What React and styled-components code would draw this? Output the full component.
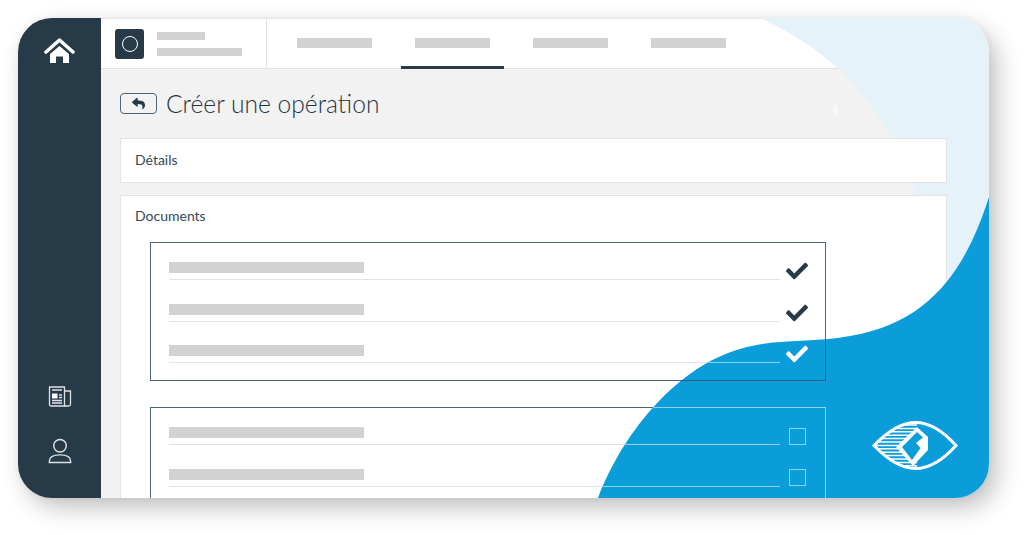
import React from 'react'
import styled, { createGlobalStyle } from 'styled-components'
import { FaCheck, FaReply } from 'react-icons/fa'

const BLOB = 'M989 197 C968 262 935 322 850 336 C815 343 775 338 740 349 C680 366 625 428 598 498 L989 498 Z'
const WASH = 'M760 18 C790 31 816 49 838 68 C860 88 878 115 892 138 C903 158 913 180 920 215 L930 260 L989 300 L989 18 Z'
const EYE = 'M874 445.5 C888 431 902 422.5 915.5 422.5 C929 422.5 943 431 956 445.5 C943 460 929 468.5 915.5 468.5 C902 468.5 888 460 874 445.5 Z'
const STRIPES = [425, 428.4, 431.8, 435.2, 438.6, 442, 445.4, 448.8, 452.2, 455.6, 459, 462.4, 465.8]
const LINES = [279.5, 321.5, 362.5, 444.5, 486.5]
const TABS = [1, 2, 3, 4]

export default function App() {
  return (
    <>
      <GlobalStyle />
      <Page>
        <Card>
          <Sidebar>
            <HomeIcon />
            <SideBottom>
              <NewsIcon />
              <UserIcon />
            </SideBottom>
          </Sidebar>

          <Main>
            <Header>
              <Brand>
                <Tile><TileRing /></Tile>
                <BrandBars>
                  <Bar $w={48} $h={8} />
                  <Bar $w={85} $h={8} />
                </BrandBars>
              </Brand>
              <Tabs>
                {TABS.map((t) => (
                  <Tab key={t} $active={t === 2}>
                    <Bar $w={75} $h={10} />
                  </Tab>
                ))}
              </Tabs>
            </Header>

            <Wash viewBox="101 18 888 480" preserveAspectRatio="none">
              <path d={WASH} fill="#e5f2fa" />
              <path d="M834 105 h3 v5 h2 l-3.500 5 l-3.500 -5 h2 Z" fill="#f9f9f9" />
            </Wash>

            <Content>
              <TitleRow>
                <BackButton><FaReply /></BackButton>
                <Title>Créer une opération</Title>
              </TitleRow>

              <Panel>
                <PanelLabel>Détails</PanelLabel>
              </Panel>

              <DocPanel>
                <DocLabel>Documents</DocLabel>
                <DocBox $gap={26}>
                  <Row><RowBody><Bar $w={195} $h={11} /></RowBody><Mark><FaCheck /></Mark></Row>
                  <Row><RowBody><Bar $w={195} $h={11} /></RowBody><Mark><FaCheck /></Mark></Row>
                  <Row><RowBody><Bar $w={195} $h={11} /></RowBody><Mark $light><FaCheck /></Mark></Row>
                </DocBox>
                <DocBox>
                  <Row><RowBody><Bar $w={195} $h={11} /></RowBody><Mark $light><Square /></Mark></Row>
                  <Row><RowBody><Bar $w={195} $h={11} /></RowBody><Mark $light><Square /></Mark></Row>
                </DocBox>
              </DocPanel>
            </Content>
          </Main>

          <Blob viewBox="18 18 971 480">
            <defs>
              <clipPath id="blob-clip"><path d={BLOB} /></clipPath>
              <clipPath id="eye-clip"><path d={EYE} /></clipPath>
            </defs>
            <path d={BLOB} fill="#0a9dda" />
            <g clipPath="url(#blob-clip)" fill="none">
              <rect x="150.500" y="242.500" width="675" height="138" stroke="#2c5d79" />
              <rect x="150.500" y="407.500" width="675" height="200" stroke="#8ed0ef" />
              {LINES.map((y) => (
                <line key={y} x1="169" x2="780" y1={y} y2={y} stroke="#8ed0ef" />
              ))}
            </g>
            <g clipPath="url(#eye-clip)">
              {STRIPES.map((y) => (
                <line key={y} x1="874" x2="917" y1={y} y2={y} stroke="#fff" strokeWidth="1.500" />
              ))}
            </g>
            <path d={EYE} fill="none" stroke="#fff" strokeWidth="3" />
            <path d="M896 447 L917 427 L928 437 L928 450 L913 466 Z" fill="#fff" />
            <path d="M902 447 L917 432 L923 437.500 L916 443 L920.500 448 L912 460 Z" fill="#0a9dda" />
          </Blob>
        </Card>
      </Page>
    </>
  )
}

function HomeIcon() {
  return (
    <HomeSvg viewBox="44 36 32 27">
      <path d="M46 51 L59.500 39 L73 51" fill="none" stroke="#fff" strokeWidth="3.500" strokeLinecap="round" strokeLinejoin="round" />
      <path d="M50 53 L59.500 45 L69 53 V62 H63 V55.500 H56 V62 H50 Z" fill="#fff" />
    </HomeSvg>
  )
}

function NewsIcon() {
  return (
    <SideSvg viewBox="0 0 24 24">
      <g fill="none" stroke="#dfe3e6" strokeWidth="1.300">
        <path d="M1.500 2.500 H16.500 V21.500 H3 Q1.500 21.500 1.500 20 Z" />
        <path d="M16.500 6.500 H22.500 V20 Q22.500 21.500 20.500 21.500 H16.500" />
        <path d="M4 5.500 H14 M11 10.500 H14 M11 13 H14 M4 16 H14 M4 18.500 H14" />
      </g>
      <rect x="4" y="9" width="5.500" height="5" fill="#fff" />
    </SideSvg>
  )
}

function UserIcon() {
  return (
    <SideSvg viewBox="0 0 24 28">
      <g fill="none" stroke="#dfe3e6" strokeWidth="1.500">
        <circle cx="12" cy="8" r="6.500" />
        <path d="M1 25.500 V24 C1 19.500 6 17.500 12 17.500 C18 17.500 23 19.500 23 24 V25.500 Z" />
      </g>
    </SideSvg>
  )
}

const GlobalStyle = createGlobalStyle`
  html, body {
    margin: 0;
    background: #fff;
    font-family: "Lato", "Liberation Sans", sans-serif;
  }
`

const Page = styled.div`
  width: 1024px;
  height: 535px;
  padding: 18px 35px 37px 18px;
  box-sizing: border-box;
  overflow: hidden;
`

const Card = styled.div`
  position: relative;
  display: flex;
  width: 971px;
  height: 480px;
  border-radius: 34px;
  overflow: hidden;
  background: #f2f2f2;
  box-shadow: 8px 10px 24px rgba(0, 0, 0, 0.24), 0 0 10px rgba(0, 0, 0, 0.05);
`

const Sidebar = styled.aside`
  flex: 0 0 83px;
  display: flex;
  flex-direction: column;
  align-items: center;
  justify-content: space-between;
  padding: 19px 0 33px;
  box-sizing: border-box;
  background: #263a48;
`

const SideBottom = styled.div`
  display: flex;
  flex-direction: column;
  align-items: center;
  gap: 28px;
`

const HomeSvg = styled.svg`
  width: 32px;
  height: 27px;
`

const SideSvg = styled.svg`
  width: 24px;
  height: 27px;
`

const Main = styled.main`
  position: relative;
  flex: 1;
  min-width: 0;
  display: flex;
  flex-direction: column;
`

const Header = styled.header`
  flex: 0 0 51px;
  display: flex;
  box-sizing: border-box;
  background: #fff;
  border-top: 1px solid #e6e6e6;
  border-bottom: 1px solid #e2e2e2;
`

const Brand = styled.div`
  flex: 0 0 166px;
  display: flex;
  align-items: center;
  gap: 13px;
  padding-left: 14px;
  box-sizing: border-box;
  border-right: 1px solid #e2e2e2;
`

const Tile = styled.div`
  display: flex;
  align-items: center;
  justify-content: center;
  width: 29px;
  height: 30px;
  border-radius: 3px;
  background: #263a48;
`

const TileRing = styled.span`
  width: 14px;
  height: 14px;
  border: 1.500px solid #fff;
  border-radius: 50%;
`

const BrandBars = styled.div`
  display: flex;
  flex-direction: column;
  gap: 8px;
`

const Bar = styled.span`
  display: block;
  width: ${(p) => p.$w}px;
  height: ${(p) => p.$h}px;
  background: #d2d2d2;
`

const Tabs = styled.nav`
  display: flex;
  gap: 15px;
  padding-left: 16px;
`

const Tab = styled.div`
  display: flex;
  align-items: center;
  justify-content: center;
  width: 103px;
  box-sizing: border-box;
  border-bottom: 3px solid ${(p) => (p.$active ? '#263a48' : 'transparent')};
  margin-bottom: -1px;
`

const Wash = styled.svg`
  position: absolute;
  inset: 0;
  width: 100%;
  height: 100%;
`

const Content = styled.div`
  position: relative;
  flex: 1;
  display: flex;
  flex-direction: column;
  padding: 23px 42px 0 19px;
  min-height: 0;
`

const TitleRow = styled.div`
  flex: none;
  display: flex;
  align-items: center;
  gap: 9px;
  height: 22px;
  margin-bottom: 24px;
`

const BackButton = styled.div`
  display: flex;
  align-items: center;
  justify-content: center;
  width: 37px;
  height: 21px;
  box-sizing: border-box;
  border: 1px solid #4f6576;
  border-radius: 4px;
  color: #263a48;
  font-size: 13px;
`

const Title = styled.h1`
  margin: 0;
  font-size: 24.600px;
  font-weight: 300;
  color: #1f3443;
  white-space: nowrap;
`

const Panel = styled.section`
  flex: none;
  height: 45px;
  display: flex;
  align-items: center;
  padding: 0 0 3px 14px;
  box-sizing: border-box;
  background: #fff;
  border: 1px solid #e2e2e2;
  margin-bottom: 12px;
`

const PanelLabel = styled.span`
  font-size: 14px;
  color: #33485a;
`

const DocPanel = styled.section`
  flex: none;
  height: 400px;
  padding: 11px 0 0 29px;
  box-sizing: border-box;
  background: #fff;
  border: 1px solid #e2e2e2;
`

const DocLabel = styled(PanelLabel)`
  display: block;
  height: 18px;
  line-height: 18px;
  margin: 0 0 17px -15px;
`

const DocBox = styled.div`
  display: flex;
  flex-direction: column;
  gap: 23.500px;
  width: 676px;
  box-sizing: border-box;
  margin-bottom: ${(p) => p.$gap || 0}px;
  padding: 19px 0 17px 18px;
  border: 1px solid #4f6576;
`

const Row = styled.div`
  display: flex;
  height: 18px;
`

const RowBody = styled.div`
  flex: 0 0 611px;
  box-sizing: border-box;
  border-bottom: 1px solid #e3e3e3;
`

const Mark = styled.div`
  position: relative;
  z-index: 3;
  display: flex;
  align-items: center;
  justify-content: center;
  width: 34px;
  font-size: 22px;
  color: ${(p) => (p.$light ? '#fff' : '#263a48')};
`

const Square = styled.span`
  width: 17px;
  height: 17px;
  box-sizing: border-box;
  border: 1.500px solid #8ed0ef;
`

const Blob = styled.svg`
  position: absolute;
  inset: 0;
  z-index: 2;
  width: 100%;
  height: 100%;
  pointer-events: none;
`
